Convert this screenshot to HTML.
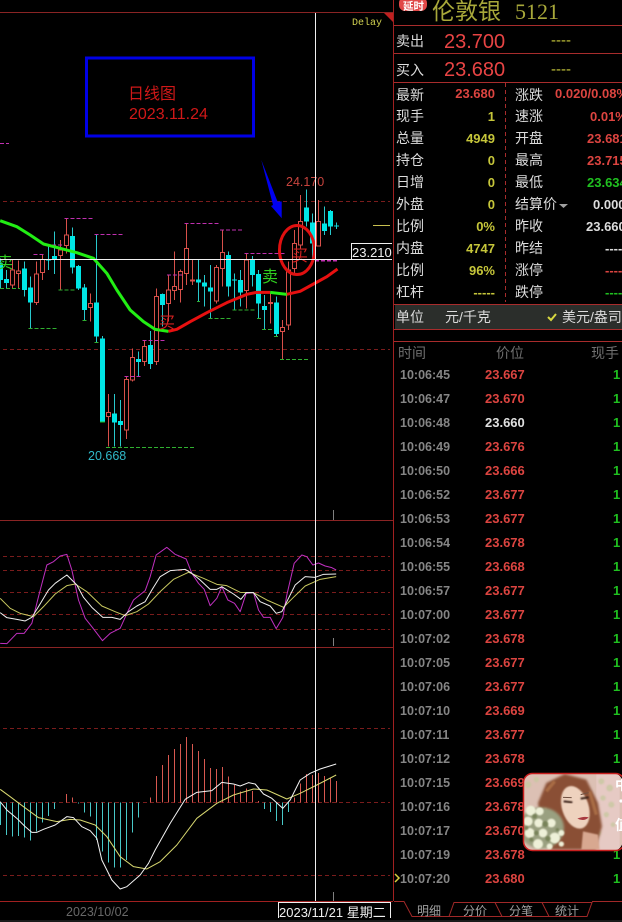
<!DOCTYPE html>
<html><head><meta charset="utf-8"><style>
html,body{margin:0;padding:0;background:#000;width:622px;height:922px;overflow:hidden}
svg{display:block;position:absolute;left:0;top:0}
text{font-family:"Liberation Sans","Noto Sans CJK SC",sans-serif}
.l{font-size:14px;fill:#dcdcdc}
.v{font-size:13px;font-weight:bold}
.y{fill:#c6c63a}.r{fill:#dc4440}.g{fill:#20c020}.w{fill:#dcdcdc}
.t{font-size:12.5px;font-weight:bold;fill:#858585}
.p{font-size:13px;font-weight:bold;fill:#dc4440}
.n{font-size:13px;font-weight:bold;fill:#20c020}
.h{font-size:14px;fill:#707070}
.b{font-size:12px;fill:#a0a0a0}
</style></head><body>
<svg width="622" height="922" viewBox="0 0 622 922" xmlns="http://www.w3.org/2000/svg">
<rect width="622" height="922" fill="#000"/>

<!-- chart frame -->
<g shape-rendering="crispEdges" stroke="#8a2424" fill="none">
<path d="M0 12.5H393M0 520.5H393M0 647.5H393"/>
<path d="M0 901.5H393" stroke="#a02020"/>
<path d="M393.5 0V901" stroke="#a02020"/>
</g>
<path d="M384 13H393V22Z" fill="#c02020"/>
<text x="352" y="25" font-size="10" style="font-family:'Liberation Mono',monospace" fill="#d0d050">Delay</text>

<!-- annotation box -->
<rect x="86.5" y="58" width="167" height="78" fill="none" stroke="#0000e6" stroke-width="3"/>
<text x="128" y="99" font-size="16" fill="#d01818">日线图</text>
<text x="129" y="119" font-size="16" fill="#d01818">2023.11.24</text>

<!-- dashed guides main -->
<g shape-rendering="crispEdges" stroke="#7a1c1c" fill="none" stroke-dasharray="4 3">
<path d="M3 201.5H390M3 349.5H390"/>
<path d="M3 556.5H390M3 570.5H390M3 592.5H390M3 614.5H390M3 629.5H390"/>
<path d="M3 728.5H390M3 802.5H390M3 875.5H390"/>
</g>

<!-- candles -->
<g transform="translate(.17,130) scale(.33333)" fill="none">
<g shape-rendering="crispEdges">
<path stroke="#d8504a" stroke-width="3" d="M37 390V475M55 392V475M109 395V525M127 375V450M181 330V480M199 265V370M271 490V575M325 792V950M379 740V927M397 655V755M433 632V708M469 475V705M505 435V575M523 365V510M541 418V518M559 280V465M577 390V465M649 405V520M667 300V470M739 370V535M811 490V580M847 570V687M865 395V600M883 300V430M901 195V355M955 210V350"/>
<path stroke="#d8504a" stroke-width="3" fill="#000" d="M31 420h12v45h-12zM49 423h12v8h-12zM103 432h12v85h-12zM121 388h12v40h-12zM175 360h12v17h-12zM193 315h12v32h-12zM265 520h12v13h-12zM319 847h12v13h-12zM373 748h12v152h-12zM391 682h12v68h-12zM427 650h12v45h-12zM463 500h12v195h-12zM499 480h12v40h-12zM517 470h12v12h-12zM535 425h12v53h-12zM553 355h12v75h-12zM571 450h12v3h-12zM643 412h12v101h-12zM661 367h12v48h-12zM733 390h12v92h-12zM805 518h12v2h-12zM841 592h12v13h-12zM859 420h12v165h-12zM877 340h12v75h-12zM895 275h12v70h-12zM949 275h12v73h-12z"/>
<path stroke="#28c8cc" stroke-width="3" d="M1 385V475M19 420V475M73 395V500M91 440V595M145 350V420M163 305V432M217 292V430M235 405V480M253 462V570M289 313V637M307 618V877M343 792V950M361 810V950M415 665V740M451 603V717M487 490V590M595 390V515M613 435V530M631 405V565M685 365V500M703 430V540M721 420V530M757 378V470M775 420V565M793 495V598M829 500V620M919 178V290M937 250V385M973 230V315M991 240V315M1009 278V297"/>
<path fill="#00e6e6" d="M-6 400h15v50h-15zM12 447h15v12h-15zM66 415h15v65h-15zM84 473h15v45h-15zM138 387h15v5h-15zM156 378h15v10h-15zM210 318h15v95h-15zM228 408h15v67h-15zM246 473h15v67h-15zM282 518h15v102h-15zM300 625h15v252h-15zM336 850h15v28h-15zM354 873h15v12h-15zM408 687h15v9h-15zM444 645h15v57h-15zM480 492h15v33h-15zM588 448h15v10h-15zM606 457h15v13h-15zM624 472h15v13h-15zM678 375h15v95h-15zM696 449h15v3h-15zM714 450h15v38h-15zM750 390h15v45h-15zM768 432h15v88h-15zM786 528h15v12h-15zM822 517h15v95h-15zM912 232h15v43h-15zM930 277h15v63h-15zM966 280h15v23h-15zM984 243h15v47h-15zM1002 287h15v3h-15z"/>
<path stroke="#20c020" stroke-width="3" d="M300 876h15"/>
<!-- highs -->
<g stroke="#c030b0" stroke-width="3" stroke-dasharray="12 6">
<path d="M0 40H27M193 265H280M283 313H370M100 373H135M155 345H190M553 280H657M660 300H730M733 370H855M500 435H545M427 632H495M373 740H423"/>
<path d="M945 392H1017" stroke-width="4"/>
</g>
<!-- lows -->
<g stroke="#30b030" stroke-width="3" stroke-dasharray="12 6">
<path d="M0 475H60M175 480H225M85 595H170M247 572H260M590 515H600M625 565H693M697 540H765M770 565H785M785 598H820M822 620H835M840 688H927M318 952H585M283 637H295"/>
</g>
</g>
<!-- moving average -->
<path d="M0 272L50 290L90 315L130 342L180 355L230 368L280 385L320 430L350 480L390 540L430 575L465 598L505 604" stroke="#22ee14" stroke-width="9" fill="none" stroke-linejoin="round"/>
<path d="M505 604L530 598L570 575L620 548L680 518L740 493L770 487L810 487" stroke="#e81010" stroke-width="9" fill="none" stroke-linejoin="round"/>
<path d="M810 487L860 493" stroke="#22ee14" stroke-width="9" fill="none"/>
<path d="M860 493L900 484L940 462L980 440L1012 417" stroke="#e81010" stroke-width="9" fill="none" stroke-linejoin="round"/>
</g>

<!-- signal labels -->
<text x="-3" y="268" font-size="16" fill="#30d020">卖</text>
<text x="262" y="282" font-size="16" fill="#30d020">卖</text>
<text x="159" y="328" font-size="16" fill="#d02020">买</text>
<text x="292" y="261" font-size="16" fill="#d02020">买</text>
<ellipse cx="297" cy="250" rx="17.5" ry="24.5" fill="none" stroke="#e01010" stroke-width="3"/>
<path d="M261.3 160L277.5 201.5L281.7 201.5L281.7 218.3L271 206L273 205Z" fill="#0000f0"/>
<text x="286" y="186" font-size="12.5" fill="#c8443e">24.170</text>
<text x="88" y="460" font-size="12.5" fill="#30b8c8">20.668</text>

<!-- KDJ -->
<g transform="translate(.17,520) scale(.33333)" fill="none" stroke-width="3" stroke-linejoin="round">
<path stroke="#c030c0" d="M0 370L20 371L50 340L72 340L95 310L115 230L140 135L160 125L180 108L200 103L215 150L235 240L255 295L275 320L307 362L330 340L360 325L385 270L400 240L435 212L450 170L468 105L500 82L525 103L558 117L575 160L595 190L612 208L630 257L650 235L665 200L683 240L703 250L720 275L738 220L760 218L775 270L790 292L810 292L828 326L848 292L860 225L882 130L905 105L920 110L938 135L955 129L975 138L995 143L1008 150"/>
<path stroke="#c8c860" d="M0 235L30 265L60 280L100 290L130 260L165 222L200 197L225 192L260 215L305 258L345 275L375 287L410 275L445 252L480 215L520 178L565 157L610 175L650 193L680 197L720 217L760 218L800 240L850 262L880 232L915 198L960 178L1008 170"/>
<path stroke="#f0f0f0" d="M0 278L20 293L50 298L75 303L95 292L115 260L145 210L165 190L200 165L230 195L250 232L275 262L308 292L335 292L360 298L385 275L410 258L435 245L455 210L480 170L510 152L555 148L575 160L600 180L630 208L650 208L665 200L700 222L722 238L738 218L760 218L780 245L810 258L828 280L845 275L865 235L885 195L915 170L945 172L970 163L1008 162"/>
</g>

<!-- MACD -->
<g transform="translate(.17,720) scale(.33333)" fill="none" stroke-linejoin="round">
<path shape-rendering="crispEdges" stroke="#48c8c8" stroke-width="3" d="M1 247V315M19 247V345M37 247V350M55 247V348M73 247V352M91 247V362M109 247V335M127 247V308M145 247V288M163 247V267M235 247V250M253 247V278M271 247V290M289 247V360M307 247V395M325 247V428M343 247V443M361 247V443M379 247V420M397 247V337M415 247V293M793 247V267M811 247V276M829 247V303M847 247V315M865 247V276"/>
<path shape-rendering="crispEdges" stroke="#d85850" stroke-width="3" d="M199 247V222M217 247V233M451 247V233M469 247V168M487 247V135M505 247V105M523 247V87M541 247V72M559 247V51M577 247V72M595 247V93M613 247V117M631 247V144M649 247V147M667 247V141M685 247V170M703 247V195M721 247V215M739 247V205M757 247V213M775 247V243M883 247V232M901 247V190M919 247V162M937 247V165M955 247V159M973 247V168M991 247V172M1009 247V183"/>
<path stroke="#d8d870" stroke-width="3" d="M0 208L30 230L70 260L115 293L170 305L210 298L240 300L285 315L320 350L360 410L400 440L440 447L480 425L530 375L590 295L650 250L700 225L760 207L800 210L860 237L900 220L950 195L1008 165"/>
<path stroke="#f4f4f4" stroke-width="3" d="M0 245L20 270L50 295L75 320L95 337L110 337L130 328L165 315L200 290L220 293L245 320L270 332L290 355L305 420L335 480L360 507L380 500L420 465L445 430L465 390L510 310L555 238L590 217L635 212L665 187L700 192L720 198L745 188L765 192L790 222L815 235L848 265L870 240L900 180L930 160L960 147L1008 132"/>
</g>

<!-- crosshair and ticks -->
<g shape-rendering="crispEdges">
<path d="M0 259.5H351" stroke="#f0f0f0"/>
<path d="M315.5 13V901" stroke="#f0f0f0"/>
<path d="M333.5 510V520M333.5 638V646M333.5 892V901" stroke="#808080"/>
<path d="M373 225.5H390" stroke="#c8c050"/>
<rect x="351" y="243.5" width="41" height="16" fill="#000"/>
<path d="M392 243.5H351.5V259.5H392" fill="none" stroke="#f0f0f0"/>
</g>
<text x="352" y="257" font-size="13" fill="#f0f0f0">23.210</text>

<!-- date axis -->
<text x="66" y="916" font-size="12.5" fill="#686868">2023/10/02</text>
<path shape-rendering="crispEdges" d="M278.5 918V902.5H390.5V918" fill="none" stroke="#f0f0f0"/>
<text x="279" y="917" font-size="13" fill="#f0f0f0">2023/11/21 星期二</text>
<rect x="0" y="920" width="622" height="2" fill="#1a1a1a"/>

<!-- quote header -->
<rect x="399" y="-3" width="28" height="14" rx="6" fill="#e04848"/>
<text x="403" y="9.5" font-size="10.5" font-weight="bold" fill="#fff">延时</text>
<text x="432" y="19" font-size="23" fill="#a8a83a">伦敦银</text>
<text x="515" y="19" font-size="22" style="font-family:'Liberation Serif',serif" fill="#a8a83a">5121</text>
<g shape-rendering="crispEdges" stroke="#a82c2c" fill="none">
<path d="M394 25.5H622M394 53.5H622M394 82.5H622"/>
<path d="M505.5 83V302" stroke-dasharray="4 3"/>
<path d="M394 304.5H622M394 329.5H622M394 341.5H622"/>
</g>
<text class="l" x="396" y="46">卖出</text>
<text x="444" y="48" font-size="20" fill="#e84444">23.700</text>
<text x="551" y="45" font-size="15" fill="#c6c63a">----</text>
<text class="l" x="396" y="75">买入</text>
<text x="444" y="76" font-size="20" fill="#e84444">23.680</text>
<text x="551" y="74" font-size="15" fill="#c6c63a">----</text>

<!-- stats labels -->
<text class="l" x="396" y="100">最新</text><text class="l" x="396" y="121">现手</text><text class="l" x="396" y="143">总量</text><text class="l" x="396" y="165">持仓</text><text class="l" x="396" y="187">日增</text><text class="l" x="396" y="209">外盘</text><text class="l" x="396" y="231">比例</text><text class="l" x="396" y="253">内盘</text><text class="l" x="396" y="275">比例</text><text class="l" x="396" y="297">杠杆</text>
<text class="l" x="515" y="100">涨跌</text><text class="l" x="515" y="121">速涨</text><text class="l" x="515" y="143">开盘</text><text class="l" x="515" y="165">最高</text><text class="l" x="515" y="187">最低</text><text class="l" x="515" y="209">结算价</text><text class="l" x="515" y="231">昨收</text><text class="l" x="515" y="253">昨结</text><text class="l" x="515" y="275">涨停</text><text class="l" x="515" y="297">跌停</text>
<path d="M559 204H568L563.5 208Z" fill="#a0a0a0"/>
<g text-anchor="end">
<text class="v r" x="495" y="98">23.680</text><text class="v y" x="495" y="121">1</text><text class="v y" x="495" y="143">4949</text><text class="v y" x="495" y="165">0</text><text class="v y" x="495" y="187">0</text><text class="v y" x="495" y="209">0</text><text class="v y" x="495" y="231">0%</text><text class="v y" x="495" y="253">4747</text><text class="v y" x="495" y="275">96%</text><text class="v y" x="495" y="297">-----</text>
</g>
<text class="v r" x="555" y="98">0.020/0.08%</text>
<text class="v r" x="590" y="121">0.01%</text>
<text class="v r" x="587" y="143">23.681</text>
<text class="v r" x="587" y="165">23.715</text>
<text class="v g" x="587" y="187">23.634</text>
<text class="v w" x="593" y="209">0.000</text>
<text class="v w" x="586" y="231">23.660</text>
<text class="v w" x="605" y="253">-----</text>
<text class="v r" x="605" y="275">-----</text>
<text class="v g" x="605" y="297">-----</text>

<!-- unit row -->
<rect x="395" y="305" width="227" height="24" fill="#2b2e2b"/>
<text class="l" x="396" y="322">单位</text>
<text class="l" x="445" y="322">元/千克</text>
<path d="M548 317L551 320L556 314" stroke="#d8d840" stroke-width="2" fill="none"/>
<text class="l" x="562" y="322">美元/盎司</text>

<!-- ticks table -->
<text class="h" x="398" y="358">时间</text><text class="h" x="496" y="358">价位</text><text class="h" x="591" y="358">现手</text>
<text class="t" x="400" y="379">10:06:45</text><text class="p" x="485" y="379">23.667</text><text class="n" x="613" y="379">1</text>
<text class="t" x="400" y="403">10:06:47</text><text class="p" x="485" y="403">23.670</text><text class="n" x="613" y="403">1</text>
<text class="t" x="400" y="427">10:06:48</text><text class="p" x="485" y="427" style="fill:#e0e0e0">23.660</text><text class="n" x="613" y="427">1</text>
<text class="t" x="400" y="451">10:06:49</text><text class="p" x="485" y="451">23.676</text><text class="n" x="613" y="451">1</text>
<text class="t" x="400" y="475">10:06:50</text><text class="p" x="485" y="475">23.666</text><text class="n" x="613" y="475">1</text>
<text class="t" x="400" y="499">10:06:52</text><text class="p" x="485" y="499">23.677</text><text class="n" x="613" y="499">1</text>
<text class="t" x="400" y="523">10:06:53</text><text class="p" x="485" y="523">23.677</text><text class="n" x="613" y="523">1</text>
<text class="t" x="400" y="547">10:06:54</text><text class="p" x="485" y="547">23.678</text><text class="n" x="613" y="547">1</text>
<text class="t" x="400" y="571">10:06:55</text><text class="p" x="485" y="571">23.668</text><text class="n" x="613" y="571">1</text>
<text class="t" x="400" y="595">10:06:57</text><text class="p" x="485" y="595">23.677</text><text class="n" x="613" y="595">1</text>
<text class="t" x="400" y="619">10:07:00</text><text class="p" x="485" y="619">23.677</text><text class="n" x="613" y="619">1</text>
<text class="t" x="400" y="643">10:07:02</text><text class="p" x="485" y="643">23.678</text><text class="n" x="613" y="643">1</text>
<text class="t" x="400" y="667">10:07:05</text><text class="p" x="485" y="667">23.677</text><text class="n" x="613" y="667">1</text>
<text class="t" x="400" y="691">10:07:06</text><text class="p" x="485" y="691">23.677</text><text class="n" x="613" y="691">1</text>
<text class="t" x="400" y="715">10:07:10</text><text class="p" x="485" y="715">23.669</text><text class="n" x="613" y="715">1</text>
<text class="t" x="400" y="739">10:07:11</text><text class="p" x="485" y="739">23.677</text><text class="n" x="613" y="739">1</text>
<text class="t" x="400" y="763">10:07:12</text><text class="p" x="485" y="763">23.678</text><text class="n" x="613" y="763">1</text>
<text class="t" x="400" y="787">10:07:15</text><text class="p" x="485" y="787">23.669</text><text class="n" x="613" y="787">1</text>
<text class="t" x="400" y="811">10:07:16</text><text class="p" x="485" y="811">23.678</text><text class="n" x="613" y="811">1</text>
<text class="t" x="400" y="835">10:07:17</text><text class="p" x="485" y="835">23.670</text><text class="n" x="613" y="835">1</text>
<text class="t" x="400" y="859">10:07:19</text><text class="p" x="485" y="859">23.678</text><text class="n" x="613" y="859">1</text>
<text class="t" x="400" y="883">10:07:20</text><text class="p" x="485" y="883">23.680</text><text class="n" x="613" y="883">1</text>
<path d="M395 874L399 878L395 882" stroke="#d8d040" stroke-width="1.5" fill="none"/>

<!-- tabs -->
<path d="M394 901.5H404L412 916.5H587L592 902.5H454L449 916.5M495 902.5L502 916.5M542 902.5L549 916.5M592 901.5H622" fill="none" stroke="#a02828"/>
<text class="b" x="417" y="915">明细</text>
<text class="b" x="463" y="915">分价</text>
<text class="b" x="509" y="915">分笔</text>
<text class="b" x="555" y="915">统计</text>

<!-- floating photo -->
<defs>
<clipPath id="c"><rect x="523.5" y="773.5" width="99" height="77" rx="9"/></clipPath>
<filter id="f" x="-20%" y="-20%" width="140%" height="140%"><feGaussianBlur stdDeviation="4"/></filter>
<filter id="f2" x="-20%" y="-20%" width="140%" height="140%"><feGaussianBlur stdDeviation="2"/></filter>
</defs>
<g clip-path="url(#c)">
<rect x="523" y="773" width="99" height="78" fill="#dcc0b4"/>
<g transform="translate(518,768) scale(.33333)">
<rect x="235" y="10" width="70" height="240" fill="#e6cac4"/>
<g filter="url(#f2)" fill="#c8c8a0" opacity=".8">
<circle cx="30" cy="50" r="10"/><circle cx="55" cy="35" r="8"/><circle cx="120" cy="42" r="9"/><circle cx="100" cy="48" r="7"/><circle cx="250" cy="40" r="9"/><circle cx="275" cy="60" r="10"/><circle cx="255" cy="90" r="8"/><circle cx="280" cy="110" r="9"/><circle cx="265" cy="140" r="8"/><circle cx="285" cy="170" r="7"/><circle cx="240" cy="195" r="9"/><circle cx="225" cy="230" r="8"/>
</g>
<path d="M60 105L85 45L140 18L205 35L240 105L252 175L232 245L100 245L70 170Z" fill="#8a5034" filter="url(#f)"/>
<path d="M85 70L110 40M215 70L235 140M80 120L92 170" stroke="#a86c44" stroke-width="10" fill="none" filter="url(#f2)"/>
<path d="M195 190L240 200L245 245L190 245Z" fill="#d8a890" filter="url(#f2)"/>
<ellipse cx="172" cy="118" rx="40" ry="66" fill="#eed2be" transform="rotate(-18 172 118)" filter="url(#f2)"/>
<path d="M137 100l26 3M188 92l24-4" stroke="#3a2018" stroke-width="6" filter="url(#f2)"/>
<path d="M135 88l26 1M188 80l24-6" stroke="#705040" stroke-width="3"/>
<path d="M178 152q18-8 34-4q-14 14-34 4Z" fill="#a83a40"/>
<ellipse cx="70" cy="180" rx="68" ry="62" fill="#9aa080" filter="url(#f)"/>
<g filter="url(#f2)" fill="#eef0d8">
<circle cx="38" cy="128" r="15"/><circle cx="65" cy="130" r="12"/><circle cx="30" cy="160" r="14"/><circle cx="62" cy="165" r="13"/><circle cx="100" cy="165" r="13"/><circle cx="35" cy="195" r="15"/><circle cx="75" cy="195" r="13"/><circle cx="110" cy="210" r="16"/><circle cx="60" cy="228" r="15"/><circle cx="130" cy="195" r="9"/><circle cx="95" cy="235" r="9"/><circle cx="130" cy="228" r="8"/>
</g>
<g filter="url(#f2)" fill="#6f7c50" opacity=".8">
<circle cx="50" cy="145" r="7"/><circle cx="82" cy="168" r="9"/><circle cx="55" cy="195" r="7"/><circle cx="90" cy="212" r="8"/><circle cx="25" cy="180" r="6"/><circle cx="40" cy="215" r="6"/><circle cx="118" cy="185" r="5"/>
</g>
</g>
<text x="615" y="790" font-size="14" font-weight="bold" fill="#fff">中</text>
<circle cx="621" cy="801" r="1.6" fill="#fff"/>
<text x="615" y="830" font-size="14" font-weight="bold" fill="#fff">值</text>
</g>
<rect x="523.5" y="773.5" width="101" height="77" rx="9" fill="none" stroke="#c81e1e" stroke-width="1.5"/>
</svg>
</body></html>
